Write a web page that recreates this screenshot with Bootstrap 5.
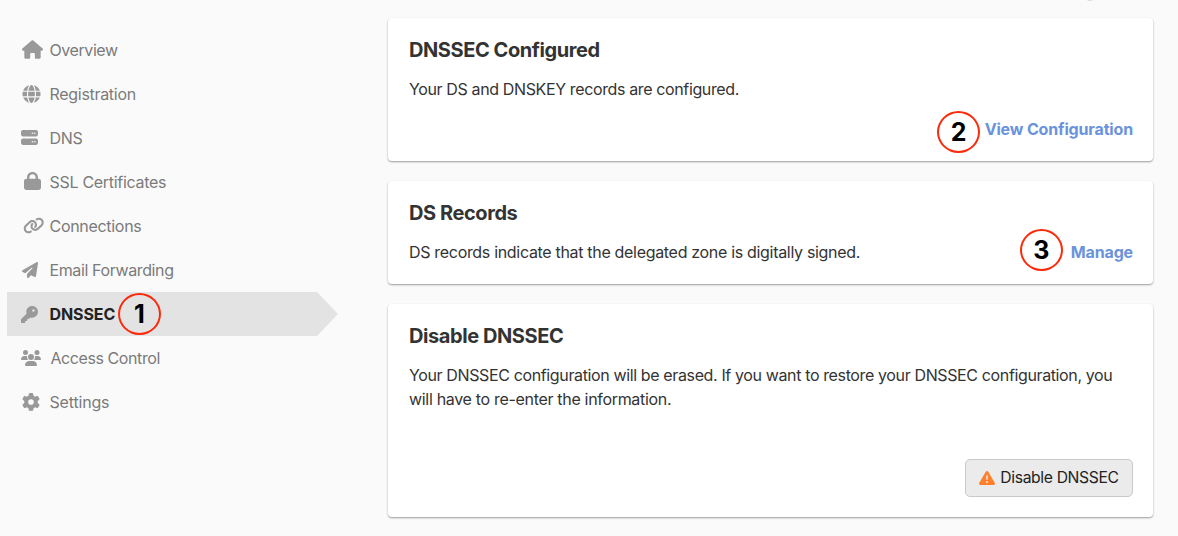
<!DOCTYPE html>
<html lang="en">
<head>
<meta charset="utf-8">
<meta name="viewport" content="width=device-width, initial-scale=1">
<title>DNSSEC</title>
<link href="https://cdn.jsdelivr.net/npm/bootstrap@5.3.0/dist/css/bootstrap.min.css" rel="stylesheet">
<style>
body{background:#fafafa;color:#333;font-family:Inter,"Liberation Sans",sans-serif;font-size:16px;line-height:24px;letter-spacing:-.25px;height:536px;overflow:hidden}
.page{height:536px;padding:18px 25px 0 7px}
.side-nav{width:331px;margin:10px 50px 0 0}
.side-nav .nav-link{height:44px;width:331px;color:#7b7b7b;padding:0 0 0 13px;letter-spacing:-.3px}
.side-nav .nav-link.active{background:#e3e3e3;color:#222;font-weight:700;letter-spacing:-.1px;clip-path:polygon(0 0,310px 0,331px 50%,310px 100%,0 100%)}
.side-nav .tight{letter-spacing:-.42px}
.side-nav .loose{letter-spacing:-.17px}
.ico{width:29.5px;flex:none;display:flex;align-items:center}
.ico svg{fill:#999;display:block}
.panel{border:0;border-radius:4px;background:#fff;box-shadow:0 1px 2px rgba(0,0,0,.38);padding:0 20px 0 21px}
.panel h2{font-size:20px;line-height:24px;font-weight:700;margin:20px 0 0;letter-spacing:-.42px;color:#333}
.panel p{margin:15px 0 0;letter-spacing:-.37px}
.panel .wider{letter-spacing:-.315px}
.act{color:#6a93dc;font-weight:700;text-decoration:none;letter-spacing:-.15px}
.step{width:43px;height:42px;border:2px solid #fb2a0a;border-radius:50%;color:#000;font-weight:700;font-size:25px;letter-spacing:0;flex:none;display:flex;align-items:center;justify-content:center}
.btn-off{height:38px;width:168px;background:#ebebeb;border:1px solid #c9c9c9;border-radius:5px;color:#222;padding:0;letter-spacing:-.36px}
.btn-off svg{fill:#ff7f2a;margin-right:5px}
.smudge{left:1085px;top:-7px;width:10px;height:8px;border-radius:50%;background:#ddd}
</style>
</head>
<body>
<div class="smudge position-absolute"></div>
<div class="page d-flex align-items-start">
<nav class="side-nav nav flex-column flex-nowrap flex-shrink-0">
<a class="nav-link d-flex align-items-center"><span class="ico"><svg style="margin-left:2px;margin-top:-1px" width="21" height="19" viewBox="0 0 576 512"><path d="M575.8 255.5c0 18-15 32.1-32 32.1h-32l.7 160.2c0 2.7-.2 5.4-.5 8.1V472c0 22.1-17.9 40-40 40H392c-22.1 0-40-17.9-40-40V384c0-17.7-14.3-32-32-32H256c-17.7 0-32 14.3-32 32v88c0 22.1-17.9 40-40 40H104c-22.1 0-40-17.9-40-40V287.6H32c-18 0-32-14-32-32.1c0-9 3-17 10-24L266.4 8c7-7 15-8 22-8s15 2 21 7L564.8 231.5c8 7 12 15 11 24z"/></svg></span><span class="tight">Overview</span></a>
<a class="nav-link d-flex align-items-center"><span class="ico"><svg style="margin-left:2px;margin-top:-1px" width="19" height="18" viewBox="0 0 512 512"><path d="M352 256c0 22.2-1.2 43.6-3.3 64H163.3c-2.2-20.4-3.3-41.8-3.3-64s1.2-43.6 3.3-64H348.7c2.2 20.4 3.3 41.8 3.3 64zm28.8-64H503.9c5.3 20.5 8.1 41.9 8.1 64s-2.8 43.5-8.1 64H380.8c2.1-20.6 3.2-42 3.2-64s-1.1-43.4-3.2-64zm112.6-32H376.7c-10-63.9-29.8-117.4-55.3-151.6c78.3 20.7 142 77.5 171.9 151.6zm-149.1 0H167.7c6.1-36.4 15.5-68.6 27-94.7c10.5-23.6 22.2-40.7 33.5-51.5C239.4 3.2 248.7 0 256 0s16.6 3.2 27.8 13.8c11.3 10.8 23 27.9 33.5 51.5c11.6 26 20.9 58.2 27 94.7zm-209 0H18.6C48.6 85.9 112.2 29.1 190.6 8.4C165.1 42.6 145.3 96.1 135.3 160zM8.1 192H131.2c-2.1 20.6-3.2 42-3.2 64s1.1 43.4 3.2 64H8.1C2.8 299.5 0 278.1 0 256s2.8-43.5 8.1-64zM194.7 446.6c-11.6-26-20.9-58.2-27-94.6H344.3c-6.1 36.4-15.5 68.6-27 94.6c-10.5 23.6-22.2 40.7-33.5 51.5C272.6 508.8 263.3 512 256 512s-16.6-3.2-27.8-13.8c-11.3-10.8-23-27.9-33.5-51.5zM135.3 352c10 63.9 29.8 117.4 55.3 151.6C112.2 482.9 48.6 426.1 18.6 352H135.3zm358.1 0c-30 74.1-93.6 130.9-171.9 151.6c25.5-34.2 45.2-87.7 55.3-151.6H493.4z"/></svg></span><span>Registration</span></a>
<a class="nav-link d-flex align-items-center"><span class="ico"><svg style="margin-left:1px;margin-top:-1px" width="17" height="17" viewBox="0 0 512 512"><path d="M64 32C28.7 32 0 60.7 0 96v64c0 35.3 28.7 64 64 64H448c35.3 0 64-28.7 64-64V96c0-35.3-28.7-64-64-64H64zm280 72a24 24 0 1 1 0 48 24 24 0 1 1 0-48zm48 24a24 24 0 1 1 48 0 24 24 0 1 1 -48 0zM64 288c-35.3 0-64 28.7-64 64v64c0 35.3 28.7 64 64 64H448c35.3 0 64-28.7 64-64V352c0-35.3-28.7-64-64-64H64zm280 72a24 24 0 1 1 0 48 24 24 0 1 1 0-48zm48 24a24 24 0 1 1 48 0 24 24 0 1 1 -48 0z"/></svg></span><span>DNS</span></a>
<a class="nav-link d-flex align-items-center"><span class="ico"><svg style="margin-left:4px;margin-top:-2px" width="17" height="18" viewBox="0 0 448 512" preserveAspectRatio="none"><path d="M144 144v48H304V144c0-44.2-35.8-80-80-80s-80 35.8-80 80zM80 192V144C80 64.5 144.5 0 224 0s144 64.5 144 144v48h16c35.3 0 64 28.7 64 64V448c0 35.3-28.7 64-64 64H64c-35.3 0-64-28.7-64-64V256c0-35.3 28.7-64 64-64H80z"/></svg></span><span>SSL Certificates</span></a>
<a class="nav-link d-flex align-items-center"><span class="ico"><svg style="margin-left:3px;margin-top:-2px" width="21.5" height="17" viewBox="0 0 640 512"><path d="M579.8 267.7c56.5-56.5 56.5-148 0-204.5c-50-50-128.8-56.5-186.3-15.4l-1.6 1.1c-14.4 10.3-17.7 30.3-7.4 44.6s30.3 17.7 44.6 7.4l1.6-1.1c32.1-22.9 76-19.3 103.8 8.6c31.5 31.5 31.5 82.5 0 114L422.3 334.8c-31.5 31.5-82.5 31.5-114 0c-27.9-27.9-31.5-71.8-8.6-103.8l1.1-1.6c10.3-14.4 6.9-34.4-7.4-44.6s-34.4-6.9-44.6 7.4l-1.1 1.6C206.5 251.2 213 330 263 380c56.5 56.5 148 56.5 204.5 0L579.8 267.7zM60.2 244.3c-56.5 56.5-56.5 148 0 204.5c50 50 128.8 56.5 186.3 15.4l1.6-1.1c14.4-10.3 17.7-30.3 7.4-44.6s-30.3-17.7-44.6-7.4l-1.6 1.1c-32.1 22.9-76 19.3-103.8-8.6C74 372 74 321 105.5 289.5L217.7 177.2c31.5-31.5 82.5-31.5 114 0c27.9 27.9 31.5 71.8 8.6 103.9l-1.1 1.6c-10.3 14.4-6.9 34.4 7.4 44.6s34.4 6.9 44.6-7.4l1.1-1.6C433.5 260.8 427 182 377 132c-56.5-56.5-148-56.5-204.5 0L60.2 244.3z"/></svg></span><span>Connections</span></a>
<a class="nav-link d-flex align-items-center"><span class="ico"><svg style="margin-left:1.5px" width="16" height="16" viewBox="0 0 512 512"><path d="M498.1 5.6c10.1 7 15.4 19.1 13.5 31.2l-64 416c-1.5 9.7-7.4 18.2-16 23s-18.9 5.4-28 1.6L284 427.7l-68.5 74.1c-8.9 9.7-22.9 12.9-35.2 8.1S160 493.2 160 480V396.4c0-4 1.5-7.8 4.2-10.7L331.8 202.8c5.8-6.3 5.6-16-.4-22s-15.7-6.4-22-.7L106 360.8 17.7 316.6C7.1 311.3 .3 300.7 0 288.9s5.9-22.8 16.1-28.7l448-256c10.7-6.1 23.9-5.5 34 1.4z"/></svg></span><span style="letter-spacing:-.38px">Email Forwarding</span></a>
<a class="nav-link active d-flex align-items-center"><span class="ico"><svg style="margin-left:1px" width="17" height="17" viewBox="0 0 512 512"><path d="M336 352c97.2 0 176-78.8 176-176S433.2 0 336 0S160 78.8 160 176c0 18.7 2.9 36.8 8.3 53.7L7 391c-4.5 4.5-7 10.6-7 17v80c0 13.3 10.7 24 24 24h80c13.3 0 24-10.7 24-24V448h40c13.3 0 24-10.7 24-24V384h40c6.4 0 12.5-2.5 17-7l33.3-33.3c16.9 5.4 35 8.3 53.7 8.3zM376 96a40 40 0 1 1 0 80 40 40 0 1 1 0-80z"/></svg></span><span>DNSSEC</span><span class="step" style="margin-left:2.8px">1</span></a>
<a class="nav-link d-flex align-items-center"><span class="ico me-1" style="width:26.5px"><svg style="margin-left:.5px" width="20" height="16" viewBox="0 0 640 512"><path d="M144 0a80 80 0 1 1 0 160A80 80 0 1 1 144 0zM512 0a80 80 0 1 1 0 160A80 80 0 1 1 512 0zM0 298.7C0 239.8 47.8 192 106.7 192h42.7c15.9 0 31 3.5 44.6 9.7c-1.3 7.2-1.9 14.7-1.9 22.3c0 38.2 16.8 72.5 43.3 96H21.3C9.6 320 0 310.4 0 298.7zM405.3 320c26.6-23.5 43.3-57.8 43.3-96c0-7.6-.7-15-1.9-22.3c13.6-6.3 28.7-9.7 44.6-9.7h42.7C592.2 192 640 239.8 640 298.7c0 11.8-9.6 21.3-21.3 21.3H405.3zM224 224a96 96 0 1 1 192 0 96 96 0 1 1 -192 0zM128 485.3C128 411.7 187.7 352 261.3 352H378.7C452.3 352 512 411.7 512 485.3c0 14.7-11.9 26.7-26.7 26.7H154.7c-14.7 0-26.7-11.9-26.7-26.7z"/></svg></span><span class="tight">Access Control</span></a>
<a class="nav-link d-flex align-items-center"><span class="ico"><svg style="margin-left:1.5px;margin-top:-1px" width="18" height="18" viewBox="0 0 512 512"><path d="M495.9 166.6c3.2 8.7 .5 18.4-6.4 24.6l-43.3 39.4c1.1 8.3 1.7 16.8 1.7 25.4s-.6 17.1-1.7 25.4l43.3 39.4c6.9 6.2 9.6 15.9 6.4 24.6c-4.4 11.9-9.7 23.3-15.8 34.3l-4.7 8.1c-6.6 11-14 21.4-22.1 31.2c-5.9 7.2-15.7 9.6-24.5 6.8l-55.7-17.7c-13.4 10.3-28.2 18.9-44 25.4l-12.5 57.1c-2 9.1-9 16.3-18.2 17.8c-13.8 2.3-28 3.5-42.5 3.5s-28.7-1.2-42.5-3.5c-9.2-1.5-16.2-8.7-18.2-17.8l-12.5-57.1c-15.8-6.5-30.6-15.1-44-25.4L83.1 425.9c-8.8 2.8-18.6 .3-24.5-6.8c-8.1-9.8-15.5-20.2-22.1-31.2l-4.7-8.1c-6.1-11-11.4-22.4-15.8-34.3c-3.2-8.7-.5-18.4 6.4-24.6l43.3-39.4C64.6 273.1 64 264.6 64 256s.6-17.1 1.7-25.4L22.4 191.2c-6.9-6.2-9.6-15.9-6.4-24.6c4.4-11.9 9.7-23.3 15.8-34.3l4.7-8.1c6.6-11 14-21.4 22.1-31.2c5.9-7.2 15.7-9.6 24.5-6.8l55.7 17.7c13.4-10.3 28.2-18.9 44-25.4l12.5-57.1c2-9.1 9-16.3 18.2-17.8C227.3 1.2 241.5 0 256 0s28.7 1.2 42.5 3.5c9.2 1.5 16.2 8.7 18.2 17.8l12.5 57.1c15.8 6.5 30.6 15.1 44 25.4l55.7-17.7c8.8-2.8 18.6-.3 24.5 6.8c8.1 9.8 15.5 20.2 22.1 31.2l4.7 8.1c6.1 11 11.4 22.4 15.8 34.3zM256 336a80 80 0 1 0 0-160 80 80 0 1 0 0 160z"/></svg></span><span class="loose">Settings</span></a>
</nav>
<main class="flex-grow-1 d-flex flex-column" style="gap:20px">
<section class="card panel" style="height:143px">
<h2>DNSSEC Configured</h2>
<p>Your DS and DNSKEY records are configured.</p>
<div class="d-flex justify-content-end align-items-start" style="margin-top:10px"><span class="step" style="margin-right:4.5px">2</span><a class="act" style="margin-top:6px">View Configuration</a></div>
</section>
<section class="card panel" style="height:103px">
<h2>DS Records</h2>
<div class="d-flex align-items-start" style="margin-top:4px"><p class="wider me-auto" style="margin-top:11px">DS records indicate that the delegated zone is digitally signed.</p><span class="step" style="margin-right:8px">3</span><a class="act" style="margin-top:11px">Manage</a></div>
</section>
<section class="card panel" style="height:213px">
<h2>Disable DNSSEC</h2>
<p>Your DNSSEC configuration will be erased. If you want to restore your DNSSEC configuration, you <span class="wider">will have to re-enter the information.</span></p>
<button class="btn btn-off ms-auto d-flex align-items-center justify-content-center" style="margin-top:48px"><svg width="16" height="16" viewBox="0 0 512 512"><path d="M256 32c14.2 0 27.3 7.5 34.5 19.8l216 368c7.3 12.4 7.3 27.7 .2 40.1S486.3 480 472 480H40c-14.3 0-27.6-7.7-34.7-20.1s-7-27.8 .2-40.1l216-368C228.7 39.5 241.8 32 256 32zm0 128c-13.3 0-24 10.7-24 24V296c0 13.3 10.7 24 24 24s24-10.7 24-24V184c0-13.3-10.7-24-24-24zm32 224a32 32 0 1 0 -64 0 32 32 0 1 0 64 0z"/></svg><span style="font-size:15.7px">Disable DNSSEC</span></button>
</section>
</main>
</div>
<script src="https://cdn.jsdelivr.net/npm/bootstrap@5.3.0/dist/js/bootstrap.bundle.min.js"></script>
</body>
</html>
